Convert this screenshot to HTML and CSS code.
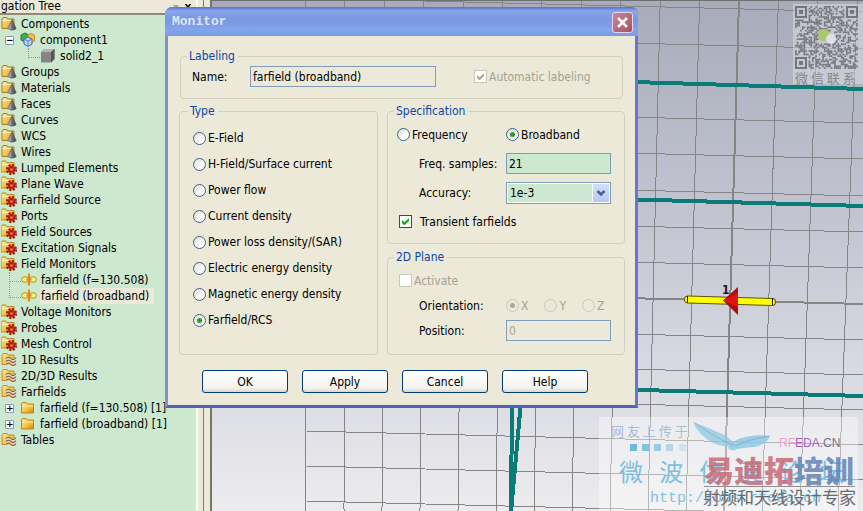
FILE: index.html
```
<!DOCTYPE html>
<html lang="en">
<head>
    <meta charset="UTF-8">
    <meta name="viewport" content="width=device-width, initial-scale=1.0">
    <title>Monitor</title>
    <link rel="stylesheet" href="styles.css">
</head>
<body>
    <!-- shared icons -->
    <svg class="defs" aria-hidden="true">
        <defs>
            <linearGradient id="gold" x1="0" y1="0" x2="1" y2="1">
                <stop offset="0" stop-color="#ffe9a0"/>
                <stop offset="0.5" stop-color="#f8c548"/>
                <stop offset="1" stop-color="#d38a10"/>
            </linearGradient>
            <linearGradient id="steel" x1="0" x2="1">
                <stop offset="0" stop-color="#d5d8dc"/>
                <stop offset="0.5" stop-color="#6d737a"/>
                <stop offset="1" stop-color="#3d4248"/>
            </linearGradient>
            <symbol id="cone" viewBox="0 0 16 16">
                <path d="M1 3 2 1.5h4L7 3h6v9.500H1z" fill="url(#gold)" stroke="#b57a18"/>
                <path d="M2 4.500h10" stroke="#fff3c0"/>
                <path d="M11 3.500 6.800 12.700q4.200 3 8.400 0z" fill="url(#steel)" stroke="#4c5156" stroke-width=".6"/>
            </symbol>
            <symbol id="gear" viewBox="0 0 16 16">
                <path d="M0 2.500 1 1h4l1 1.500h7V12H0z" fill="url(#gold)" stroke="#c48a2c"/>
                <path d="M1 4.500h8" stroke="#fff3c0"/>
                <circle cx="10.500" cy="9.500" r="4.600" fill="none" stroke="#9c1608" stroke-width="2" stroke-dasharray="2.100 1.510"/>
                <circle cx="10.500" cy="9.500" r="3.800" fill="#b82010"/>
                <circle cx="10.500" cy="9.500" r="1.300" fill="#e88a50"/>
            </symbol>
            <symbol id="waves" viewBox="0 0 16 16">
                <path d="M1 3 2 1.500h4L7 3h6v9.500H1z" fill="url(#gold)" stroke="#c48a2c"/>
                <path d="M5 6.900q2.500-2.400 5 0t5-.8M5 9.900q2.500-2.400 5 0t5-.8M5 12.900q2.500-2.400 5 0t5-.8" fill="none" stroke="#fbe9c4" stroke-width="2.200"/>
                <path d="M5 6.500q2.500-2.400 5 0t5-.8M5 9.500q2.500-2.400 5 0t5-.8M5 12.500q2.500-2.400 5 0t5-.8" fill="none" stroke="#7a6a5c" stroke-width="1.100"/>
            </symbol>
            <symbol id="folder" viewBox="0 0 16 16">
                <path d="M1.500 4 2.500 2.500h4L7.500 4h6v9h-12z" fill="url(#gold)" stroke="#c08418"/>
                <path d="M2 6h11" stroke="#fff0b0"/>
            </symbol>
            <symbol id="cubes" viewBox="0 0 16 16">
                <path d="M1 3 5 1l4 2v5L5 10 1 8z" fill="#3fae4c" stroke="#1e7a34"/>
                <path d="M8 3l3-1.500L14.500 3v6L11 10.500 8 9z" fill="#f5bf4c" stroke="#c58a1c"/>
                <path d="M4 7 8 5l4 2v5l-4 2.500L4 12z" fill="#c4d6f8" stroke="#3d62b4"/>
                <path d="M4 7l4 2 4-2M8 9v5.500" fill="none" stroke="#5a7cc4"/>
            </symbol>
            <symbol id="solid" viewBox="0 0 16 16">
                <path d="M1 4 4.500 1h10v10L11 14.500H1z" fill="#858585"/>
                <path d="M1 4 4.500 1h10L11 4z" fill="#b5b5b5"/>
                <path d="M11 4l3.500-3v10L11 14.500z" fill="#565656"/>
            </symbol>
            <symbol id="lobes" viewBox="0 0 16 16">
                <ellipse cx="4" cy="7.500" rx="3.600" ry="2.800" fill="#f5ee7c" stroke="#a89c28"/>
                <ellipse cx="12" cy="7.500" rx="3.600" ry="2.800" fill="#f5ee7c" stroke="#a89c28"/>
                <path d="M8 1.500v12M5.500 7.500h5" stroke="#e08a1c" stroke-width="2"/>
            </symbol>
        </defs>
    </svg>

    <div class="app">
        <aside class="sidebar">
            <header class="pane-title">
                <span>gation Tree</span>
                <span class="pane-tools">
                    <svg width="8" height="6" viewBox="0 0 8 6"><path d="M1 1h6L4 5z" fill="#aaa798"/></svg>
                    <svg width="8" height="6" viewBox="0 0 8 6"><path d="M1.500 0l5 6M6.500 0l-5 6" stroke="#000" stroke-width="1.500"/></svg>
                </span>
            </header>
            <ul class="tree">
                <li><svg class="icon"><use href="#cone"/></svg>Components</li>
                <li class="child"><i class="toggle">−</i><svg class="icon"><use href="#cubes"/></svg>component1</li>
                <li class="grandchild"><svg class="icon"><use href="#solid"/></svg>solid2_1</li>
                <li><svg class="icon"><use href="#cone"/></svg>Groups</li>
                <li><svg class="icon"><use href="#cone"/></svg>Materials</li>
                <li><svg class="icon"><use href="#cone"/></svg>Faces</li>
                <li><svg class="icon"><use href="#cone"/></svg>Curves</li>
                <li><svg class="icon"><use href="#cone"/></svg>WCS</li>
                <li><svg class="icon"><use href="#cone"/></svg>Wires</li>
                <li><svg class="icon"><use href="#gear"/></svg>Lumped Elements</li>
                <li><svg class="icon"><use href="#gear"/></svg>Plane Wave</li>
                <li><svg class="icon"><use href="#gear"/></svg>Farfield Source</li>
                <li><svg class="icon"><use href="#gear"/></svg>Ports</li>
                <li><svg class="icon"><use href="#gear"/></svg>Field Sources</li>
                <li><svg class="icon"><use href="#gear"/></svg>Excitation Signals</li>
                <li><svg class="icon"><use href="#gear"/></svg>Field Monitors</li>
                <li class="child leaf"><svg class="icon"><use href="#lobes"/></svg>farfield (f=130.508)</li>
                <li class="child leaf last"><svg class="icon"><use href="#lobes"/></svg><span class="selected">farfield (broadband)</span></li>
                <li><svg class="icon"><use href="#gear"/></svg>Voltage Monitors</li>
                <li><svg class="icon"><use href="#gear"/></svg>Probes</li>
                <li><svg class="icon"><use href="#gear"/></svg>Mesh Control</li>
                <li><svg class="icon"><use href="#waves"/></svg>1D Results</li>
                <li><svg class="icon"><use href="#waves"/></svg>2D/3D Results</li>
                <li><svg class="icon"><use href="#waves"/></svg>Farfields</li>
                <li class="child"><i class="toggle">+</i><svg class="icon"><use href="#folder"/></svg>farfield (f=130.508) [1]</li>
                <li class="child"><i class="toggle">+</i><svg class="icon"><use href="#folder"/></svg>farfield (broadband) [1]</li>
                <li><svg class="icon"><use href="#waves"/></svg>Tables</li>
            </ul>
        </aside>
        <div class="splitter"></div>

        <main class="view">
            <svg class="scene" viewBox="212 0 651 511" preserveAspectRatio="xMaxYMin slice">
                <g id="grid" stroke="#858585" fill="none" shape-rendering="crispEdges"></g>
                <g stroke="#0b7b78" stroke-width="4" fill="none" shape-rendering="crispEdges">
                    <path d="M306 71 863 88"/>
                    <path d="M306 189 863 205"/>
                    <path d="M306 380 863 395"/>
                    <path d="M512 400 511 511M521 400 511 511"/>
                </g>
                <!-- wire with its port -->
                <path d="M688 298.500 772 301" stroke="#57570a" stroke-width="8" stroke-linecap="round"/>
                <path d="M688 298.500 772 301" stroke="#ffff00" stroke-width="6" stroke-linecap="round"/>
                <path d="M687.500 295v7M772.500 297v7" stroke="#222"/>
                <path d="M723 299.500 738 286v28z" fill="#b00d0d"/>
                <path d="M723 299.500 738 292v14z" fill="#dc1414"/>
                <text class="port" x="722" y="293">1</text>

                <!-- contact code -->
                <rect x="793" y="3" width="70" height="80" fill="#e4e4ea" opacity=".45"/>
                <g id="code" fill="#74767e"></g>
                <circle cx="824" cy="34" r="6" fill="#a9c76b"/>
                <circle cx="831" cy="38" r="5" fill="#dce2ea"/>
                <text class="contact" x="795" y="82">微 信 联 系</text>

                <!-- watermark -->
                <rect x="599" y="416" width="259" height="95" fill="#fff" opacity=".4"/>
                <text class="mark upload" x="611" y="435">网 友 上 传 于</text>
                <g fill="#5fb4dc">
                    <rect x="630" y="443" width="7" height="7" opacity=".9"/>
                    <rect x="642" y="443" width="7" height="7" opacity=".75"/>
                    <rect x="654" y="443" width="7" height="7" opacity=".6"/>
                    <rect x="666" y="443" width="7" height="7" opacity=".4"/>
                    <rect x="679" y="443" width="7" height="7" opacity=".2"/>
                </g>
                <path d="M693 421q14 5 27 11 11 4 15 13-16 2-27-6-11-8-15-18z" fill="#8fc8e2" opacity=".75"/>
                <path d="M728 447q4-8 17-11 13-3 25-1-4 9-16 11-12 1-17 2-5 3-9-1z" fill="#8fc8e2" opacity=".85"/>
                <path d="M735 445q14-7 35-10M695 422q22 16 38 22" stroke="#5a9fc4" fill="none" opacity=".5"/>
                <text class="mark forum" x="619" y="480">微   波   仿   真   论   坛</text>
                <text class="mark link" x="650" y="501">http://bbs.rfeda.cn</text>
                <text class="mark site" x="779" y="446"><tspan fill="#e7a5cf">RF</tspan><tspan fill="#a560c8">EDA</tspan><tspan fill="#777086">.CN</tspan></text>
                <text class="mark brand" x="704" y="481"><tspan fill="#c96a78">易迪拓</tspan><tspan fill="#6484b4">培训</tspan></text>
                <path d="M704 485.500h151" stroke="#8d8f92"/>
                <text class="mark motto" x="703" y="503">射频和天线设计专家</text>
            </svg>
        </main>
    </div>

    <form class="dialog">
        <header class="titlebar">
            <h1>Monitor</h1>
            <button type="button" class="close" aria-label="Close">
                <svg width="13" height="13" viewBox="0 0 13 13"><path d="M2 2l9 9M11 2l-9 9" stroke="#fff" stroke-width="2.500"/></svg>
            </button>
        </header>
        <div class="content">
            <fieldset class="labeling">
                <legend>Labeling</legend>
                <label for="name">Name:</label>
                <input type="text" id="name" value="farfield (broadband)" readonly>
                <label class="option off"><input type="checkbox" checked disabled>Automatic labeling</label>
            </fieldset>
            <div class="columns">
                <fieldset class="type">
                    <legend>Type</legend>
                    <label class="option"><input type="radio" name="type">E-Field</label>
                    <label class="option"><input type="radio" name="type">H-Field/Surface current</label>
                    <label class="option"><input type="radio" name="type">Power flow</label>
                    <label class="option"><input type="radio" name="type">Current density</label>
                    <label class="option"><input type="radio" name="type">Power loss density/(SAR)</label>
                    <label class="option"><input type="radio" name="type">Electric energy density</label>
                    <label class="option"><input type="radio" name="type">Magnetic energy density</label>
                    <label class="option"><input type="radio" name="type" checked>Farfield/RCS</label>
                </fieldset>
                <div class="stack">
                    <fieldset class="spec">
                        <legend>Specification</legend>
                        <div class="row">
                            <label class="option"><input type="radio" name="range">Frequency</label>
                            <label class="option"><input type="radio" name="range" checked>Broadband</label>
                        </div>
                        <div class="row">
                            <label class="indent" for="samples">Freq. samples:</label>
                            <input type="text" id="samples" value="21">
                        </div>
                        <div class="row">
                            <label class="indent" for="accuracy">Accuracy:</label>
                            <span class="combo">
                                <select id="accuracy"><option>1e-3</option></select>
                                <svg class="arrow" viewBox="0 0 15 18"><path d="M4 7l3.500 3.500L11 7" fill="none" stroke="#4d6185" stroke-width="2.500"/></svg>
                            </span>
                        </div>
                        <label class="option wide"><input type="checkbox" checked>Transient farfields</label>
                    </fieldset>
                    <fieldset class="plane">
                        <legend>2D Plane</legend>
                        <label class="option off"><input type="checkbox" disabled>Activate</label>
                        <div class="row">
                            <span class="indent">Orientation:</span>
                            <div class="axes">
                                <label class="option off"><input type="radio" name="axis" checked disabled>X</label>
                                <label class="option off"><input type="radio" name="axis" disabled>Y</label>
                                <label class="option off"><input type="radio" name="axis" disabled>Z</label>
                            </div>
                        </div>
                        <div class="row">
                            <label class="indent" for="position">Position:</label>
                            <input type="text" id="position" value="0" disabled>
                        </div>
                    </fieldset>
                </div>
            </div>
            <footer class="buttons">
                <button type="button">OK</button>
                <button type="button">Apply</button>
                <button type="button">Cancel</button>
                <button type="button">Help</button>
            </footer>
        </div>
    </form>

    <script src="scene.js"></script>
</body>
</html>
```

FILE: styles.css
```
* {
    box-sizing: border-box;
}
body {
    margin: 0;
    font: 12px/16px "DejaVu Sans Condensed", "DejaVu Sans", sans-serif;
    color: #000;
    background: #ece9d8;
    overflow: hidden;
}
.defs {
    position: absolute;
    width: 0;
    height: 0;
}
.app {
    display: flex;
    height: 100vh;
}

/* navigation tree */
.sidebar {
    flex: 0 0 198px;
    display: flex;
    flex-direction: column;
    border-right: 2px solid #fbfbf4;
    background: #cce8cf;
}
.pane-title {
    display: flex;
    justify-content: space-between;
    height: 15px;
    padding: 0 4px 0 1px;
    line-height: 12px;
    background: #ece9d8;
    border-bottom: 2px solid #8b8a7d;
}
.pane-tools {
    display: flex;
    align-items: center;
    gap: 4px;
    padding-top: 1px;
}
.tree {
    margin: 0;
    padding: 1px 0 0;
    list-style: none;
}
.tree li {
    display: flex;
    align-items: center;
    height: 16px;
    padding-left: 1px;
    white-space: nowrap;
}
.icon {
    flex: none;
    width: 16px;
    height: 16px;
    margin-right: 4px;
}
.tree .child {
    padding-left: 5px;
}
.leaf::before,
.grandchild::before {
    content: "";
    align-self: flex-start;
    width: 11px;
    height: 9px;
    border-left: 1px dotted #8c9c8c;
    border-bottom: 1px dotted #8c9c8c;
}
.leaf::before {
    margin-left: 4px;
}
.last::before {
    height: 16px;
    margin-top: -7px;
}
.tree .grandchild {
    padding-left: 28px;
}
.toggle {
    width: 9px;
    height: 9px;
    margin-right: 6px;
    border: 1px solid #8497b0;
    border-radius: 1px;
    background: #fff;
    font: bold 9px/7px "DejaVu Sans", sans-serif;
    text-align: center;
}
.selected {
    margin-left: -1px;
    padding: 0 5px 0 1px;
    background: #ece9d8;
}
.splitter {
    flex: 0 0 14px;
    border-right: 2px solid #77756c;
    background: linear-gradient(90deg, transparent 5px, #5c8f4c 5px, #5c8f4c 6px, transparent 6px);
}

/* 3D view */
.view {
    flex: 1;
    min-width: 0;
    border-top: 1px solid #6f6f6f;
    background: linear-gradient(#a8abba, #c4c6d2 45%, #dcdde4 78%, #ececee);
}
.scene {
    display: block;
    width: 100%;
    height: 100%;
}
.port {
    font: bold 12px "DejaVu Sans Condensed", sans-serif;
    fill: #301010;
}
.contact {
    font: 13px "Noto Sans CJK SC", sans-serif;
    fill: #85878f;
}
.mark {
    font-family: "Noto Sans CJK SC", sans-serif;
    white-space: pre;
}
.upload {
    font-size: 13px;
    fill: #a8bcd8;
}
.forum {
    font-size: 24px;
    fill: #7cbfdf;
}
.link {
    font: 15px "Liberation Mono", monospace;
    fill: #7cc4e0;
}
.site {
    font: 12px "Liberation Sans", sans-serif;
}
.brand {
    font-size: 30px;
    font-weight: 900;
    opacity: 0.85;
}
.motto {
    font-size: 17px;
    fill: #666c70;
}

/* dialog */
.dialog {
    position: absolute;
    left: 165px;
    top: 7px;
    width: 473px;
    border: 3px solid #6478cc;
    border-top: 0;
    border-left-color: #7c92d4;
    border-bottom-color: #5263b8;
    border-radius: 7px 7px 0 0;
    background: #ece9d8;
}
.titlebar {
    display: flex;
    align-items: center;
    justify-content: space-between;
    height: 29px;
    margin: 0 -3px;
    padding: 1px 5px 0 7px;
    border-radius: 7px 7px 0 0;
    background: linear-gradient(#5872c8, #8aa6ec 4px, #7b96e0 12px, #83a4ec 23px, #7c9ae4);
}
.titlebar h1 {
    margin: 0;
    font: bold 13px/16px "Liberation Mono", monospace;
    color: #dce6fc;
}
.close {
    display: grid;
    place-items: center;
    width: 21px;
    height: 21px;
    padding: 0;
    border: 1px solid #e4d4ec;
    border-radius: 3px;
    background: linear-gradient(135deg, #c48a9c, #a8505c);
}
.content {
    padding: 12px 10px 12px 11px;
}
fieldset {
    min-width: 0;
    margin: 0;
    padding: 0 11px;
    border: 1px solid #d0d0bf;
    border-radius: 4px;
}
legend {
    margin-left: -5px;
    padding: 0 3px 0 2px;
    color: #0a46a8;
}
.labeling {
    display: flex;
    align-items: center;
    margin: 0 2px 4px 1px;
    padding-top: 2px;
    padding-bottom: 11px;
}
.labeling > label:first-of-type {
    width: 58px;
}
input[type="text"] {
    height: 21px;
    padding: 0 2px;
    border: 1px solid #7f9db9;
    background: #cce8cf;
    color: #000;
    font: inherit;
}
input[readonly],
input[type="text"]:disabled {
    background: #ece9d8;
}
input[type="text"]:disabled {
    color: #a5a292;
}
#name {
    width: 186px;
    margin-right: 38px;
}
.columns {
    display: grid;
    grid-template-columns: 199px 1fr;
    column-gap: 9px;
}
.option {
    display: flex;
    align-items: center;
    gap: 2px;
}
.wide {
    gap: 8px;
}
.off {
    color: #a5a292;
}
.option input {
    appearance: none;
    display: grid;
    place-items: center;
    flex: none;
    width: 13px;
    height: 13px;
    margin: 0;
    border: 1px solid #1c5180;
    background: #fff;
    color: #21a121;
}
.option input[type="radio"] {
    border-radius: 50%;
    border-color: #3a6488;
    background: linear-gradient(135deg, #dcdcd4, #fff 70%);
}
.option input:checked::before {
    content: "";
}
.option input[type="radio"]::before {
    width: 5px;
    height: 5px;
    border-radius: 50%;
    background: currentColor;
}
.option input[type="checkbox"]::before {
    width: 7px;
    height: 7px;
    background: currentColor;
    clip-path: polygon(0 29%, 0 71%, 29% 100%, 42% 100%, 100% 43%, 100% 0, 36% 62%);
}
.option input:disabled {
    border-color: #cac8bb;
    color: #aaa898;
}
.option input[type="radio"]:disabled {
    background: #ece9d8;
}
.type {
    padding-top: 6px;
    padding-left: 13px;
}
.type .option {
    height: 26px;
}
.stack {
    display: grid;
    gap: 5px;
}
.spec {
    padding-top: 1px;
    padding-bottom: 7px;
}
.spec > * {
    height: 29px;
}
.spec > legend,
.plane > legend {
    height: 16px;
}
.plane {
    padding-top: 3px;
    padding-bottom: 11px;
}
.plane > * {
    height: 25px;
}
.row {
    display: grid;
    grid-template-columns: 107px 105px;
    align-items: center;
}
.spec .row .option:first-child {
    margin-left: -2px;
}
.indent {
    padding-left: 20px;
    white-space: nowrap;
}
.axes {
    display: flex;
    gap: 16px;
}
.combo {
    display: flex;
    position: relative;
    height: 22px;
}
.combo select {
    appearance: none;
    width: 100%;
    padding: 0 3px;
    border: 1px solid #7f9db9;
    border-radius: 0;
    outline: 1px solid #fff;
    outline-offset: -2px;
    background: #cce8cf;
    color: #000;
    font: inherit;
}
.arrow {
    position: absolute;
    right: 2px;
    top: 2px;
    width: 16px;
    height: 18px;
    border-radius: 2px;
    background: linear-gradient(#d4e0fc, #b4c8f6);
    box-shadow: -1px 0 #fff;
    pointer-events: none;
}
.buttons {
    display: flex;
    justify-content: center;
    gap: 14px;
    padding: 15px 14px 0 0;
}
.buttons button {
    width: 86px;
    height: 23px;
    padding: 0;
    border: 1px solid #003c74;
    border-radius: 3px;
    background: linear-gradient(#fff, #f4f3ee 80%, #dcd8cc);
    color: #000;
    font: inherit;
}
```

FILE: scene.js
```
const NS = 'http://www.w3.org/2000/svg';

function add(parent, tag, attrs)
{
    const el = document.createElementNS(NS, tag);
    for (const key in attrs) el.setAttribute(key, attrs[key]);
    parent.appendChild(el);
}

// working plane
const grid = document.getElementById('grid');
for (let k = -11; k <= 3; k++)
{
    add(grid, 'path', {d: `M${739 + 39.4 * k} 0L${724 + 38 * k} 511`, 'stroke-width': k == 0 ? 2 : 1});
}
[-3, 34, 108, 144, 181, 217, 253, 289, 325, 360, 395, 430, 465, 500].forEach(y =>
{
    add(grid, 'path', {d: `M306 ${y}L863 ${y + 14}`, 'stroke-width': y == 289 ? 2 : 1});
});

// code modules, 37 x 37
const code = document.getElementById('code');
const size = 37, cell = 1.7;
let seed = 7;
for (let r = 0; r < size; r++)
{
    for (let c = 0; c < size; c++)
    {
        seed = (seed * 1103515245 + 12345) % 2147483648;
        const corner = (r < 8 && (c < 8 || c > 28)) || (r > 28 && c < 8);
        const middle = Math.abs(r - 18) < 4 && Math.abs(c - 18) < 5;
        if (!corner && !middle && seed / 2147483648 > 0.5)
        {
            add(code, 'rect', {x: 795 + c * cell, y: 5 + r * cell, width: cell, height: cell});
        }
    }
}
[[0, 0], [30, 0], [0, 30]].forEach(([c, r]) =>
{
    const x = 795 + c * cell, y = 5 + r * cell;
    add(code, 'rect', {x: x + 1, y: y + 1, width: 10, height: 10, fill: 'none', stroke: '#74767e', 'stroke-width': 2});
    add(code, 'rect', {x: x + 4, y: y + 4, width: 4, height: 4});
});
```
